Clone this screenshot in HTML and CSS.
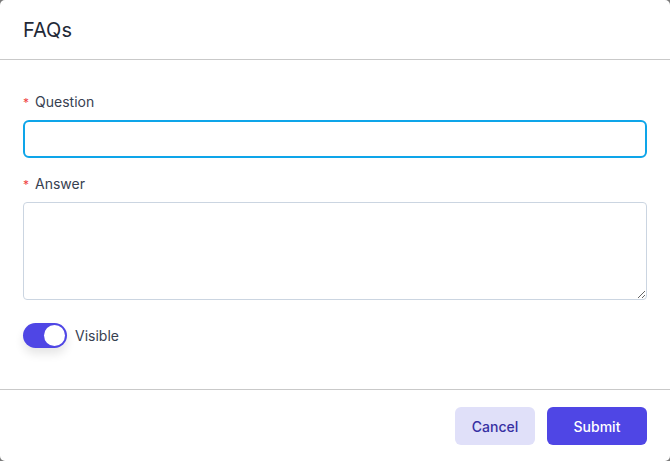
FILE: index.html
```html
<!DOCTYPE html>
<html>
<head>
<meta charset="utf-8">
<link rel="stylesheet" href="styles.css">
</head>
<body>
<div class="modal">
  <div class="modal-header"><h2 class="title">FAQs</h2></div>
  <div class="modal-body">
    <label class="label"><span class="req">*</span>Question</label>
    <input class="input focused" type="text">
    <label class="label label-gap"><span class="req">*</span>Answer</label>
    <textarea class="textarea"></textarea>
    <div class="toggle-row">
      <span class="toggle"><span class="knob"></span></span>
      <span class="toggle-label">Visible</span>
    </div>
  </div>
  <div class="modal-footer">
    <button class="btn btn-cancel">Cancel</button>
    <button class="btn btn-submit">Submit</button>
  </div>
</div>
</body>
</html>
```
FILE: styles.css
```css
* { box-sizing: border-box; }
html, body { margin: 0; padding: 0; height: 100%; }
body {
  background: #7a7a7a;
  font-family: Inter, "Noto Sans", sans-serif;
}
.modal {
  width: 670px;
  height: 461px;
  background: #fff;
  border-radius: 5px;
  display: flex;
  flex-direction: column;
  overflow: hidden;
}
.modal-header {
  height: 60px;
  border-bottom: 1px solid #c9c9c9;
  display: flex;
  align-items: center;
  padding: 0 23px;
}
.title {
  margin: 0;
  font-size: 20px;
  font-weight: 400;
  color: #1f2937;
}
.modal-body {
  padding: 32px 23px 0;
  display: flex;
  flex-direction: column;
  height: 330px;
  border-bottom: 1px solid #c9c9c9;
}
.label {
  display: block;
  font-size: 14px;
  line-height: 20px;
  font-weight: 400;
  color: #374151;
  margin-bottom: 7px;
}
.label-gap { margin-top: 16px; margin-bottom: 7px; }
.req {
  color: #ef4444;
  margin-right: 6px;
  font-size: 12px;
}
.input {
  width: 100%;
  height: 38px;
  border: 2px solid #0ea5e9;
  border-radius: 6px;
  outline: none;
  margin: 0;
}
.textarea {
  width: 100%;
  height: 98px;
  border: 1px solid #cbd5e1;
  border-radius: 4px;
  margin: 0;
  display: block;
  resize: vertical;
  font-family: inherit;
}
.toggle-row {
  margin-top: 23px;
  display: flex;
  align-items: center;
  gap: 8px;
}
.toggle {
  width: 44px;
  height: 25px;
  border-radius: 13px;
  background: #4f46e5;
  position: relative;
  box-shadow: 0 6px 10px rgba(0,0,0,0.10);
}
.knob {
  position: absolute;
  right: 2px;
  top: 2px;
  width: 21px;
  height: 21px;
  border-radius: 50%;
  background: #fff;
}
.toggle-label {
  font-size: 14px;
  font-weight: 400;
  color: #374151;
}
.modal-footer {
  flex: 1;
  display: flex;
  justify-content: flex-end;
  align-items: flex-start;
  padding: 17px 23px 0;
  gap: 12px;
}
.btn {
  height: 38px;
  border: none;
  border-radius: 6px;
  font-family: inherit;
  font-size: 14px;
  font-weight: 500;
  cursor: pointer;
}
.btn-cancel {
  width: 80px;
  background: #e0e0f9;
  color: #3730a3;
}
.btn-submit {
  width: 100px;
  background: #4f46e5;
  color: #fff;
}
```
